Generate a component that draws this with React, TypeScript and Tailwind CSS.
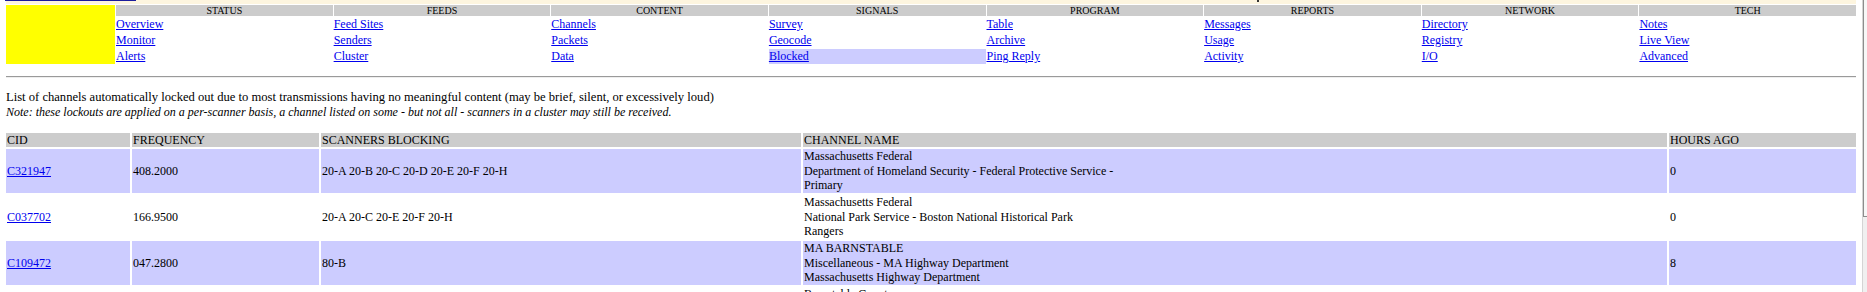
import React from 'react';

type NavColumn = { title: string; links: string[] };

const navColumns: NavColumn[] = [
  { title: 'STATUS', links: ['Overview', 'Monitor', 'Alerts'] },
  { title: 'FEEDS', links: ['Feed Sites', 'Senders', 'Cluster'] },
  { title: 'CONTENT', links: ['Channels', 'Packets', 'Data'] },
  { title: 'SIGNALS', links: ['Survey', 'Geocode', 'Blocked'] },
  { title: 'PROGRAM', links: ['Table', 'Archive', 'Ping Reply'] },
  { title: 'REPORTS', links: ['Messages', 'Usage', 'Activity'] },
  { title: 'NETWORK', links: ['Directory', 'Registry', 'I/O'] },
  { title: 'TECH', links: ['Notes', 'Live View', 'Advanced'] },
];

type BlockedRow = {
  cid: string;
  freq: string;
  scanners: string;
  name: string[];
  hours: string;
};

const rows: BlockedRow[] = [
  {
    cid: 'C321947',
    freq: '408.2000',
    scanners: '20-A 20-B 20-C 20-D 20-E 20-F 20-H',
    name: ['Massachusetts Federal', 'Department of Homeland Security - Federal Protective Service -', 'Primary'],
    hours: '0',
  },
  {
    cid: 'C037702',
    freq: '166.9500',
    scanners: '20-A 20-C 20-E 20-F 20-H',
    name: ['Massachusetts Federal', 'National Park Service - Boston National Historical Park', 'Rangers'],
    hours: '0',
  },
  {
    cid: 'C109472',
    freq: '047.2800',
    scanners: '80-B',
    name: ['MA BARNSTABLE', 'Miscellaneous - MA Highway Department', 'Massachusetts Highway Department'],
    hours: '8',
  },
  {
    cid: 'C204118',
    freq: '155.7450',
    scanners: '80-B',
    name: ['Barnstable County', 'Public Works', 'Dispatch'],
    hours: '9',
  },
];

const linkCls = 'text-[#0000ee] underline underline-offset-[1px]';

export default function App() {
  return (
    <div className="flex h-[292px] overflow-hidden bg-white text-black font-['Liberation_Serif',serif]">
      <div className="w-[1862px] shrink-0 px-[6px]">
        {/* remains of the previous block, scrolled off the top */}
        <div className="flex h-[4px] bg-[#fdf5df]">
          <div className="ml-[-1px] h-[1px] w-[131px] bg-[#1c1c9c]" />
          <div className="ml-[1121px] h-[2px] w-[2px] bg-[#333]" />
        </div>

        {/* menu */}
        <div className="mt-[1px] grid grid-cols-[109px_repeat(8,1fr)] grid-rows-[11px_15px_15px_15px] gap-x-[1px] gap-y-[1px]">
          <div className="row-span-4 bg-[#ffff00]" />
          {navColumns.map((col) => (
            <div
              key={col.title}
              className="bg-[#cccccc] text-center text-[10px] leading-[11px]"
            >
              {col.title}
            </div>
          ))}
          {[0, 1, 2].map((r) =>
            navColumns.map((col) => {
              const label = col.links[r];
              const active = label === 'Blocked';
              return (
                <div
                  key={col.title + r}
                  className={`text-[12px] leading-[15px] ${active ? 'bg-[#ccccff]' : ''}`}
                >
                  <a href="#" className={linkCls}>
                    {label}
                  </a>
                </div>
              );
            })
          )}
        </div>

        <div className="mt-[12px] border-t border-t-[#9a9a9a] border-b border-b-[#eeeeee]" />

        <div className="mt-[12px] text-[12px] leading-[15px]">
          <div className="text-[12.6px]">
            List of channels automatically locked out due to most transmissions having no meaningful content (may be brief, silent, or excessively loud)
          </div>
          <div className="italic">
            Note: these lockouts are applied on a per-scanner basis, a channel listed on some - but not all - scanners in a cluster may still be received.
          </div>
        </div>

        {/* blocked channels */}
        <div className="mt-[13px] grid grid-cols-[124px_187px_480px_864px_187px] gap-[2px] text-[12px]">
          {['CID', 'FREQUENCY', 'SCANNERS BLOCKING', 'CHANNEL NAME', 'HOURS AGO'].map((h) => (
            <div key={h} className="h-[14px] bg-[#cccccc] px-[1px] leading-[14px]">
              {h}
            </div>
          ))}
          {rows.map((row, i) => {
            const bg = i % 2 === 0 ? 'bg-[#ccccff]' : 'bg-white';
            const cell = `${bg} flex items-center px-[1px] h-[44px]`;
            return (
              <React.Fragment key={row.cid}>
                <div className={cell}>
                  <a href="#" className={linkCls}>
                    {row.cid}
                  </a>
                </div>
                <div className={cell}>{row.freq}</div>
                <div className={cell}>{row.scanners}</div>
                <div className={`${cell} leading-[14.67px]`}>
                  <div>
                    {row.name.map((n) => (
                      <div key={n}>{n}</div>
                    ))}
                  </div>
                </div>
                <div className={cell}>{row.hours}</div>
              </React.Fragment>
            );
          })}
        </div>
      </div>

      {/* window scrollbar, cut off at the right edge */}
      <div className="flex-1 border-l border-l-[#d4d4d4] bg-[#f0f0f0]">
        <div className="h-[217px] border-l border-b border-[#8c8c8c] bg-[#f7f7f7]" />
      </div>
    </div>
  );
}
